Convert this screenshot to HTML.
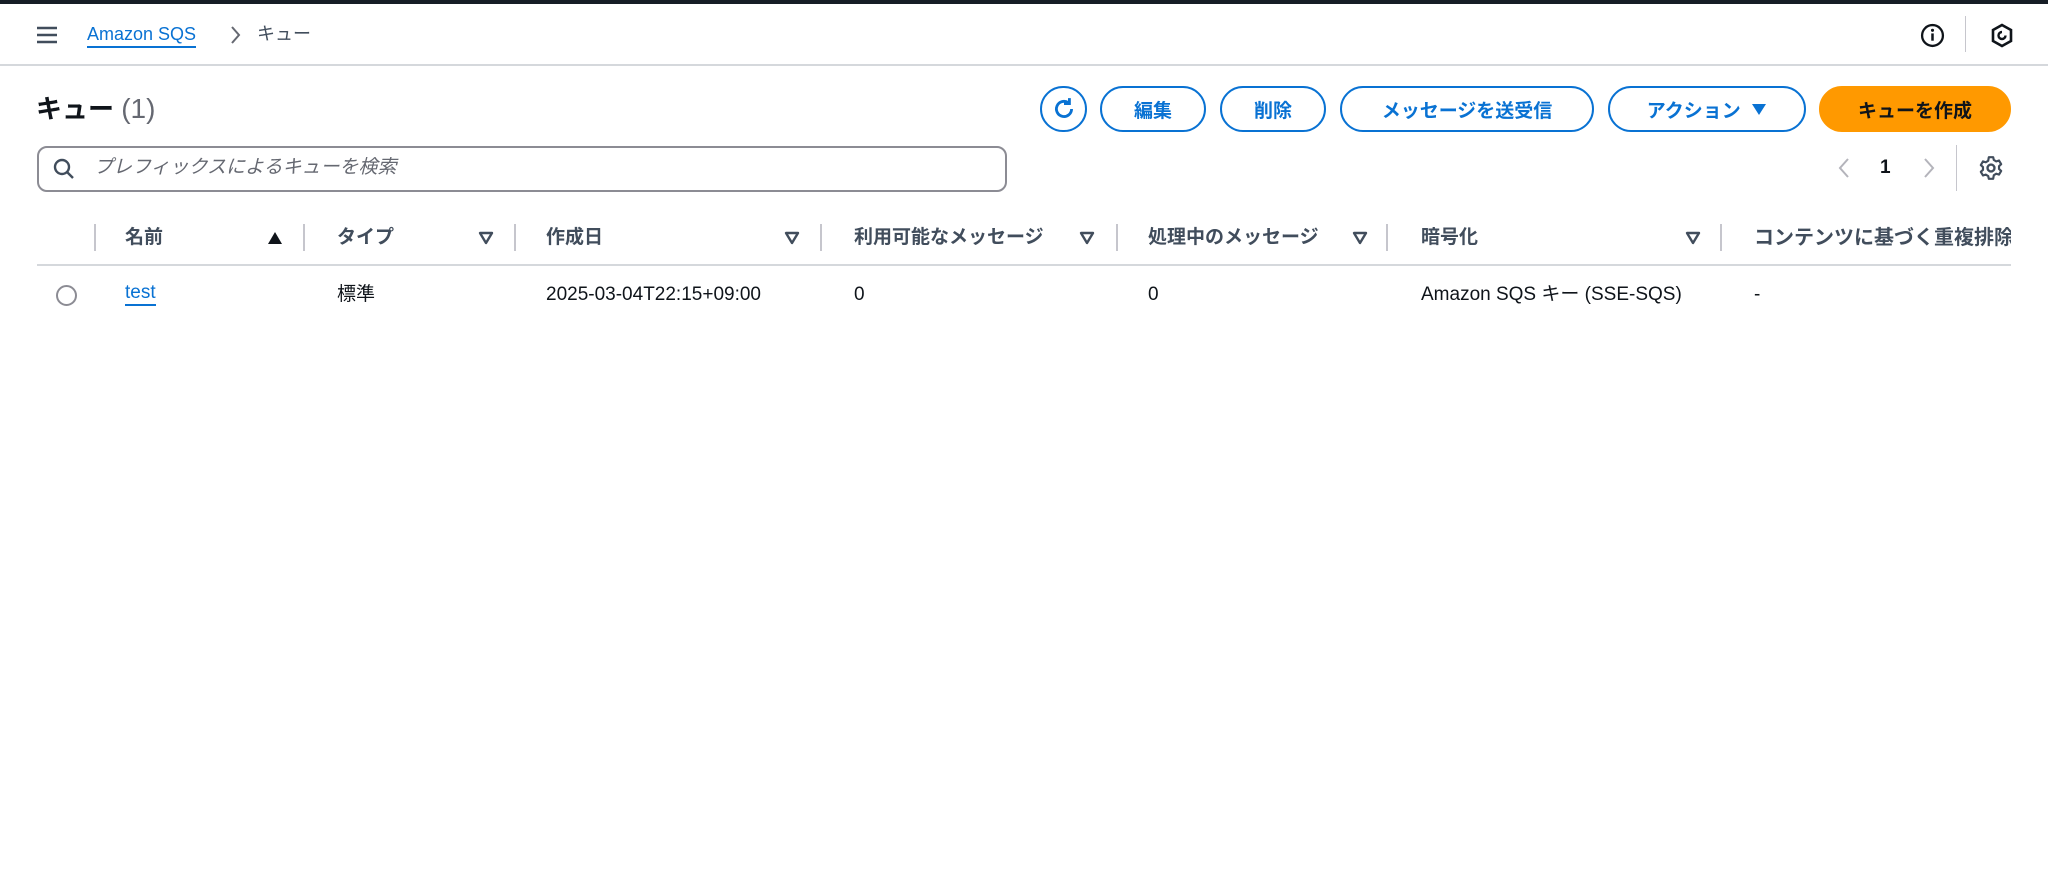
<!DOCTYPE html>
<html><head><meta charset="utf-8"><style>
*{box-sizing:border-box;margin:0;padding:0}
body{width:2048px;height:884px;background:#fff;font-family:"Liberation Sans","Noto Sans CJK JP",sans-serif;color:#0f141a;position:relative;overflow:hidden}
.a{position:absolute;white-space:nowrap}
.topbar{left:0;top:0;width:2048px;height:4px;background:#161d26}
.hdr{left:0;top:64px;width:2048px;height:2px;background:#d5d8dc}
.btn{position:absolute;top:86px;height:46px;border:2.5px solid #0972d3;border-radius:23px;color:#0972d3;font-weight:bold;font-size:19px;display:flex;align-items:center;justify-content:center}
.th{position:absolute;top:225px;font-size:19px;font-weight:bold;color:#414d5c;line-height:26px}
.sep{position:absolute;top:224px;width:2px;height:27px;background:#c6c6cd}
.td{position:absolute;top:282px;font-size:19px;line-height:26px}
.tri{position:absolute;top:231px}
</style></head><body>
<div class="a topbar"></div>
<svg class="a" style="left:36px;top:26px" width="22" height="18" viewBox="0 0 22 18"><path d="M1 2h20M1 9h20M1 16h20" stroke="#414d5c" stroke-width="2.6"/></svg>
<div class="a" style="left:87px;top:22px;font-size:18px;color:#0972d3;border-bottom:2px solid #0972d3;line-height:24px">Amazon SQS</div>
<svg class="a" style="left:228px;top:25px" width="14" height="20" viewBox="0 0 14 20"><path d="M4 2l7 8-7 8" fill="none" stroke="#656871" stroke-width="2"/></svg>
<div class="a" style="left:257px;top:22px;font-size:18px;color:#414d5c;line-height:24px">キュー</div>
<svg class="a" style="left:1920px;top:23px" width="25" height="25" viewBox="0 0 24 24"><circle cx="12" cy="12" r="10" fill="none" stroke="#0f141a" stroke-width="2.2"/><path d="M12 10v7" stroke="#0f141a" stroke-width="2.4"/><circle cx="12" cy="7" r="1.5" fill="#0f141a"/></svg>
<div class="a" style="left:1965px;top:16px;width:1px;height:36px;background:#c6c6cd"></div>
<svg class="a" style="left:1990px;top:23px" width="24" height="25" viewBox="0 0 24 25"><path d="M12 2l9 5v11l-9 5-9-5V7z" fill="none" stroke="#0f141a" stroke-width="2.6"/><path d="M12 9a3.5 3.5 0 1 0 3.5 3.5" fill="none" stroke="#0f141a" stroke-width="2.4"/></svg>
<div class="a hdr"></div>
<div class="a" style="left:36px;top:92px;font-size:26px;font-weight:bold;line-height:34px">キュー <span style="font-weight:normal;color:#656871;font-size:28px">(1)</span></div>
<div class="btn" style="left:1040px;width:47px"><svg width="26" height="26" viewBox="0 0 24 24"><path d="M19 12a7 7 0 1 1-3-5.8" fill="none" stroke="#0972d3" stroke-width="2.6"/><path d="M17 2v5h-5" fill="none" stroke="#0972d3" stroke-width="2.6"/></svg></div>
<div class="btn" style="left:1100px;width:106px">編集</div>
<div class="btn" style="left:1220px;width:106px">削除</div>
<div class="btn" style="left:1340px;width:254px">メッセージを送受信</div>
<div class="btn" style="left:1608px;width:198px">アクション&nbsp;&nbsp;<svg width="16" height="14" viewBox="0 0 16 14"><path d="M1 2h14L8 13z" fill="#0972d3"/></svg></div>
<div class="btn" style="left:1819px;width:192px;background:#ff9900;border-color:#ff9900;color:#0f141a">キューを作成</div>
<div class="a" style="left:37px;top:146px;width:970px;height:46px;border:2.5px solid #8c8c94;border-radius:10px"></div>
<svg class="a" style="left:52px;top:157px" width="24" height="24" viewBox="0 0 24 24"><circle cx="10" cy="10" r="7" fill="none" stroke="#414d5c" stroke-width="2.4"/><path d="M15 15l6 6" stroke="#414d5c" stroke-width="2.4"/></svg>
<div class="a" style="left:94px;top:155px;font-size:19px;font-style:italic;color:#656871;line-height:26px">プレフィックスによるキューを検索</div>
<svg class="a" style="left:1837px;top:157px" width="14" height="22" viewBox="0 0 14 22"><path d="M11 2L3 11l8 9" fill="none" stroke="#b4b4bb" stroke-width="2"/></svg>
<div class="a" style="left:1880px;top:155px;font-size:19px;font-weight:bold;line-height:26px">1</div>
<svg class="a" style="left:1922px;top:157px" width="14" height="22" viewBox="0 0 14 22"><path d="M3 2l8 9-8 9" fill="none" stroke="#b4b4bb" stroke-width="2"/></svg>
<div class="a" style="left:1956px;top:145px;width:1px;height:46px;background:#c6c6cd"></div>
<svg class="a" style="left:1978px;top:155px" width="26" height="26" viewBox="0 0 24 24"><circle cx="12" cy="12" r="3.2" fill="none" stroke="#414d5c" stroke-width="2.2"/><path d="M10 2h4l.6 2.6 2.3 1.3 2.5-.8 2 3.4-2 1.8v2.6l2 1.8-2 3.4-2.5-.8-2.3 1.3L14 22h-4l-.6-2.6-2.3-1.3-2.5.8-2-3.4 2-1.8v-2.6l-2-1.8 2-3.4 2.5.8 2.3-1.3z" fill="none" stroke="#414d5c" stroke-width="2" stroke-linejoin="round"/></svg>
<div class="sep" style="left:94px"></div><div class="sep" style="left:303px"></div><div class="sep" style="left:514px"></div><div class="sep" style="left:820px"></div><div class="sep" style="left:1116px"></div><div class="sep" style="left:1386px"></div><div class="sep" style="left:1720px"></div>
<div class="th" style="left:125px">名前</div><svg class="tri" style="left:267px" width="16" height="14" viewBox="0 0 16 14"><path d="M8 1l7 12H1z" fill="#0f141a"/></svg>
<div class="th" style="left:337px">タイプ</div><svg class="tri" style="left:478px" width="16" height="14" viewBox="0 0 16 14"><path d="M2 2h12L8 12z" fill="none" stroke="#414d5c" stroke-width="2.4" stroke-linejoin="round"/></svg>
<div class="th" style="left:546px">作成日</div><svg class="tri" style="left:784px" width="16" height="14" viewBox="0 0 16 14"><path d="M2 2h12L8 12z" fill="none" stroke="#414d5c" stroke-width="2.4" stroke-linejoin="round"/></svg>
<div class="th" style="left:854px">利用可能なメッセージ</div><svg class="tri" style="left:1079px" width="16" height="14" viewBox="0 0 16 14"><path d="M2 2h12L8 12z" fill="none" stroke="#414d5c" stroke-width="2.4" stroke-linejoin="round"/></svg>
<div class="th" style="left:1148px">処理中のメッセージ</div><svg class="tri" style="left:1352px" width="16" height="14" viewBox="0 0 16 14"><path d="M2 2h12L8 12z" fill="none" stroke="#414d5c" stroke-width="2.4" stroke-linejoin="round"/></svg>
<div class="th" style="left:1421px">暗号化</div><svg class="tri" style="left:1685px" width="16" height="14" viewBox="0 0 16 14"><path d="M2 2h12L8 12z" fill="none" stroke="#414d5c" stroke-width="2.4" stroke-linejoin="round"/></svg>
<div class="a" style="left:1754px;top:225px;width:257px;height:26px;overflow:hidden"><div class="th" style="position:static;font-size:20px">コンテンツに基づく重複排除</div></div>
<div class="a" style="left:37px;top:264px;width:1974px;height:2px;background:#d5d8dc"></div>
<div class="a" style="left:56px;top:285px;width:21px;height:21px;border:2px solid #8c8c94;border-radius:50%"></div>
<div class="td" style="left:125px;color:#0972d3;border-bottom:2px solid #0972d3;line-height:22px">test</div>
<div class="td" style="left:337px">標準</div>
<div class="td" style="left:546px">2025-03-04T22:15+09:00</div>
<div class="td" style="left:854px">0</div>
<div class="td" style="left:1148px">0</div>
<div class="td" style="left:1421px">Amazon SQS キー (SSE-SQS)</div>
<div class="td" style="left:1754px">-</div>
</body></html>
